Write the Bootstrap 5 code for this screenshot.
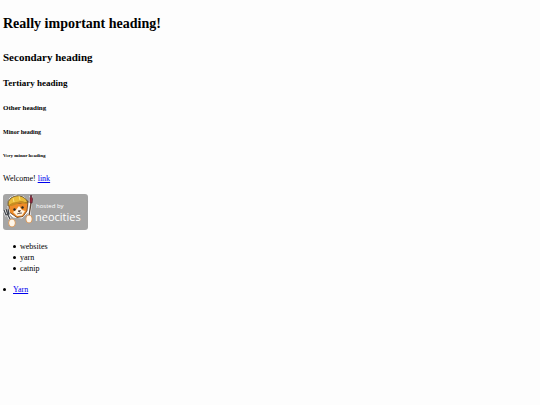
<!DOCTYPE html>
<html lang="en">
<head>
<meta charset="utf-8">
<meta name="viewport" content="width=device-width, initial-scale=1">
<title>Welcome</title>
<link href="https://cdn.jsdelivr.net/npm/bootstrap@5.3.0/dist/css/bootstrap.min.css" rel="stylesheet">
<style>
body{background:#fdfdfd;color:#000;font:8px/12px "Liberation Serif",serif}
main{padding:13px 3px 0}
h1,h2,h3,h4,h5,h6{font-weight:700;line-height:12px;margin:0 0 12px;color:#000}
h1{font-size:14px;line-height:22px;margin-bottom:14px}
h2{font-size:11px;line-height:16px}
h3{font-size:9px;line-height:13px}
h4{font-size:7px}
h5{font-size:6px}
h6{font-size:5px;margin-bottom:11px}
a{color:#0000ee}
.host-badge{width:85px;height:36px;margin-top:1px}
.dots li{line-height:11px;gap:4px}
.dots li::before{content:"";width:3px;height:3px;border-radius:50%;background:#000}
.dots .loose{gap:7px}
.nested{padding:3px 10px 2px}
</style>
<script src="https://cdn.jsdelivr.net/npm/bootstrap@5.3.0/dist/js/bootstrap.bundle.min.js" defer></script>
</head>
<body>
<main class="d-flex flex-column align-items-start">
<h1>Really important heading!</h1>
<h2>Secondary heading</h2>
<h3>Tertiary heading</h3>
<h4>Other heading</h4>
<h5>Minor heading</h5>
<h6>Very minor heading</h6>
<p class="mb-2">Welcome! <a href="#">link</a></p>
<svg class="host-badge" viewBox="0 0 85 36" role="img" aria-label="hosted by neocities">
<rect width="85" height="36" rx="3" fill="#a5a5a5"/>
<path d="M5 12 7 4 13 1 21 3 25 9 25 18 19 24 10 23 6 19Z" fill="#fff" stroke="#fff" stroke-linejoin="round"/>
<path d="M6 10 6 18 9 20 14 23.5 20 22.500 24 17 25 7 18 9Z" fill="#ef8b28" stroke="#59351c" stroke-width=".8"/>
<path d="M10 18 13 16 16 12 19 16 22 17 19 21.500 14 22Z" fill="#fff3df"/>
<path d="M5 12Q4 7 8 4 14 0 20 3 24 5 25 9L18 8 10 10Z" fill="#eabb38" stroke="#50402a" stroke-width=".8"/>
<path d="M5 12 9 9 18 7 25 9 23 10 17 9 9 12Z" fill="#c88c20"/>
<path d="M10 4 11 8M16 2 17 6" stroke="#fae27c" fill="none"/>
<circle cx="11.500" cy="15.500" r="1.2" fill="#222"/><circle cx="19.500" cy="13.500" r="1.2" fill="#222"/>
<path d="M15 17 17.500 16.500 16.500 18ZM14 20 17 19 19 19" fill="#42251c" stroke="#42251c" stroke-width=".6"/>
<path d="M1 16 3 21 6 20 5 15M3 15 5 21 9 29" fill="none" stroke="#fff" stroke-width="2.600"/>
<path d="M1 16 3 21 6 20 5 15M3 15 5 21 9 29" fill="none" stroke="#42464c" stroke-width="1.3"/>
<path d="M28 2 26 22" stroke="#fff" stroke-width="3"/>
<path d="M28 9 26 22" stroke="#614532" stroke-width="1.4"/>
<path d="M27 4 28 1 29.500 5 29 9 27 9Z" fill="#a3263a" stroke="#532633" stroke-width=".8"/>
<ellipse cx="9" cy="29" rx="3.4" ry="4" fill="#fff6e9" stroke="#d68b45" stroke-width=".8"/>
<ellipse cx="26" cy="25" rx="3.2" ry="4" fill="#fff6e9" stroke="#d68b45" stroke-width=".8"/>
<text x="33" y="14" font-family="Open Sans, sans-serif" font-size="6" fill="#fff">hosted by</text>
<text x="32" y="27" font-family="Open Sans, sans-serif" font-size="11" fill="#fff">neocities</text>
</svg>
<ul class="dots nested list-unstyled mb-0 mt-2">
<li class="d-flex align-items-center">websites</li>
<li class="d-flex align-items-center">yarn</li>
<li class="d-flex align-items-center">catnip</li>
</ul>
<ul class="dots list-unstyled mb-0 mt-2"><li class="loose d-flex align-items-center"><a href="#">Yarn</a></li></ul>
</main>
</body>
</html>
